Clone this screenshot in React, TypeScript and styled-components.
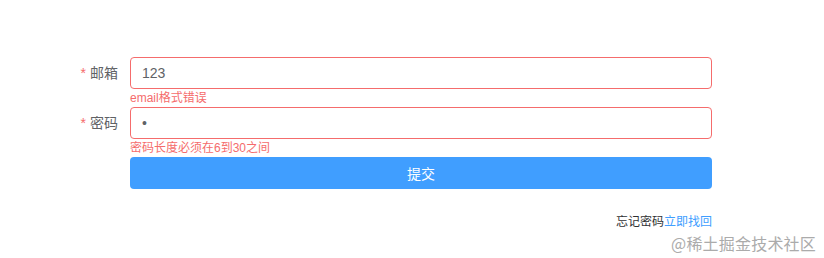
import styled, { createGlobalStyle } from "styled-components";

const GlobalStyle = createGlobalStyle`
  body {
    margin: 0;
    background: #fff;
    font-family: "Liberation Sans", "Noto Sans CJK SC", sans-serif;
  }
`;

const Page = styled.div`
  position: relative;
  width: 824px;
  height: 258px;
  overflow: hidden;
`;

const Form = styled.form`
  width: 662px;
  margin-left: 50px;
  padding-top: 57px;
`;

const FormItem = styled.div`
  display: flex;
  margin-bottom: 18px;
`;

const Label = styled.label<{ $required?: boolean }>`
  width: 80px;
  flex-shrink: 0;
  box-sizing: border-box;
  padding-right: 12px;
  text-align: right;
  font-size: 14px;
  line-height: 32px;
  color: #606266;
  &::before {
    content: ${(p) => (p.$required ? '"*"' : '""')};
    color: #f56c6c;
    margin-right: 4px;
  }
`;

const Content = styled.div`
  position: relative;
  flex: 1;
`;

const Input = styled.input<{ $error?: boolean }>`
  display: block;
  width: 100%;
  height: 32px;
  box-sizing: border-box;
  padding: 0 11px;
  border: 1px solid ${(p) => (p.$error ? "#f56c6c" : "#dcdfe6")};
  border-radius: 4px;
  outline: none;
  font-family: "Liberation Sans", "Noto Sans CJK SC", sans-serif;
  font-size: 14px;
  color: #606266;
`;

const ErrorText = styled.div`
  position: absolute;
  top: 100%;
  left: 0;
  padding-top: 3px;
  font-size: 12px;
  line-height: 1;
  color: #f56c6c;
`;

const SubmitButton = styled.button`
  width: 100%;
  height: 32px;
  border: none;
  border-radius: 4px;
  background: #409eff;
  color: #fff;
  font-family: "Liberation Sans", "Noto Sans CJK SC", sans-serif;
  font-size: 14px;
  cursor: pointer;
`;

const Forgot = styled.div`
  margin-top: 25px;
  text-align: right;
  font-size: 12px;
  line-height: 16px;
  color: #303133;
  a {
    color: #409eff;
    text-decoration: none;
  }
`;

const Watermark = styled.div`
  position: absolute;
  right: 8px;
  bottom: 4px;
  font-family: "Noto Sans CJK SC", sans-serif;
  font-size: 16px;
  line-height: 22px;
  color: #ababab;
  letter-spacing: 0.2px;
`;

export default function App() {
  return (
    <Page>
      <GlobalStyle />
      <Form onSubmit={(e) => e.preventDefault()}>
        <FormItem>
          <Label $required>邮箱</Label>
          <Content>
            <Input $error defaultValue="123" />
            <ErrorText>email格式错误</ErrorText>
          </Content>
        </FormItem>
        <FormItem>
          <Label $required>密码</Label>
          <Content>
            <Input $error type="password" defaultValue="1" />
            <ErrorText>密码长度必须在6到30之间</ErrorText>
          </Content>
        </FormItem>
        <FormItem style={{ marginBottom: 0 }}>
          <Label />
          <Content>
            <SubmitButton type="submit">提交</SubmitButton>
          </Content>
        </FormItem>
        <Forgot>
          忘记密码<a href="#">立即找回</a>
        </Forgot>
      </Form>
      <Watermark>@稀土掘金技术社区</Watermark>
    </Page>
  );
}
